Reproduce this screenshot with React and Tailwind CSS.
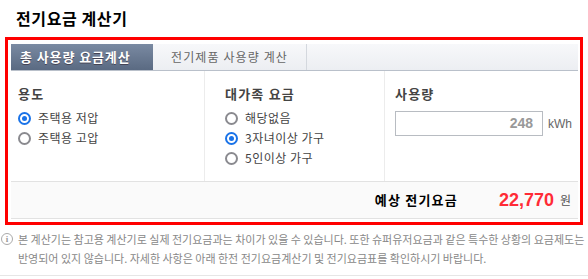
export default function App() {
  const radio = (checked) => (
    <span
      className={
        'inline-flex items-center justify-center w-[13px] h-[13px] rounded-full border-2 bg-white ' +
        (checked ? 'border-[#1a73e8]' : 'border-[#8a8a8f]')
      }
    >
      {checked && <span className="w-[5px] h-[5px] rounded-full bg-[#1a73e8]" />}
    </span>
  )

  const Option = ({ label, checked }) => (
    <div className="flex items-center h-[20px] gap-[7px] text-[12px] text-[#444] tracking-[0.5px]">
      {radio(checked)}
      <span>{label}</span>
    </div>
  )

  return (
    <div className="w-[588px] h-[279px] bg-white overflow-hidden font-['Noto_Sans_CJK_KR',sans-serif]">
      <h1 className="h-[37px] pl-[16px] pt-[6px] text-[16px] font-bold text-black leading-[24px] tracking-[0.6px]">
        전기요금 계산기
      </h1>

      <div className="mx-[5px] border-[3px] border-[#ff0000] pt-[4px] pb-[3px] pl-[3px] pr-[2px]">
        {/* tabs */}
        <div className="flex h-[27px] border-b border-[#b9c0ca] bg-gradient-to-b from-[#f7f8fa] to-[#eceef2]">
          <div className="w-[142px] flex items-center pl-[9px] text-[13px] font-bold text-white tracking-[0.9px] bg-gradient-to-b from-[#7a8aa2] to-[#5a6a82] [text-shadow:0_1px_0_#445]">
            총 사용량 요금계산
          </div>
          <div className="w-[154px] flex items-center justify-center text-[12px] text-[#666] tracking-[1.1px] border-r border-[#d4d8de]">
            전기제품 사용량 계산
          </div>
          <div className="flex-1" />
        </div>

        {/* body */}
        <div className="flex h-[110px]">
          <div className="w-[194px] border-r border-[#ececec] pl-[7px] pt-[14px]">
            <div className="text-[13px] font-bold text-[#444] leading-[18px] tracking-[1.2px]">용도</div>
            <div className="mt-[5px]">
              <Option label="주택용 저압" checked />
              <Option label="주택용 고압" />
            </div>
          </div>
          <div className="w-[180px] border-r border-[#ececec] pl-[20px] pt-[14px]">
            <div className="text-[13px] font-bold text-[#444] leading-[18px] tracking-[1.2px]">대가족 요금</div>
            <div className="mt-[5px]">
              <Option label="해당없음" />
              <Option label="3자녀이상 가구" checked />
              <Option label="5인이상 가구" />
            </div>
          </div>
          <div className="flex-1 pl-[10px] pt-[14px]">
            <div className="text-[13px] font-bold text-[#444] leading-[18px] tracking-[1.2px]">사용량</div>
            <div className="mt-[8px] flex items-center gap-[5px]">
              <div className="w-[148px] h-[25px] border border-[#b8bcc2] flex items-center justify-end pr-[9px] text-[14px] font-bold text-[#999] font-['Liberation_Sans',sans-serif]">
                248
              </div>
              <span className="text-[12px] text-[#666] font-['Liberation_Sans',sans-serif]">kWh</span>
            </div>
          </div>
        </div>

        {/* footer */}
        <div className="h-[38px] flex items-center justify-end pr-[7px] bg-[#fafafa] border-t border-b border-[#e2e2e2]">
          <span className="text-[13px] font-bold text-black tracking-[1.2px]">예상 전기요금</span>
          <span className="ml-[41px] text-[18px] font-bold text-[#ff2b36] font-['Liberation_Sans',sans-serif]">
            22,770
          </span>
          <span className="ml-[6px] text-[12px] text-[#555]">원</span>
        </div>
      </div>

      {/* note */}
      <div className="flex mt-[5px] pb-[7px] border-b border-[#e6e6e6]">
        <div className="w-[18px] pt-[3px] pl-[1px]">
          <span className="flex items-center justify-center w-[12px] h-[12px] rounded-full border border-[#aaa] text-[9px] font-bold text-[#999] font-['Liberation_Serif',serif] leading-none">
            i
          </span>
        </div>
        <p className="text-[11px] leading-[19px] tracking-[0px] text-[#888] whitespace-nowrap">
          본 계산기는 참고용 계산기로 실제 전기요금과는 차이가 있을 수 있습니다. 또한 슈퍼유저요금과 같은 특수한 상황의 요금제도는
          <br />
          반영되어 있지 않습니다. 자세한 사항은 아래 한전 전기요금계산기 및 전기요금표를 확인하시기 바랍니다.
        </p>
      </div>
    </div>
  )
}
